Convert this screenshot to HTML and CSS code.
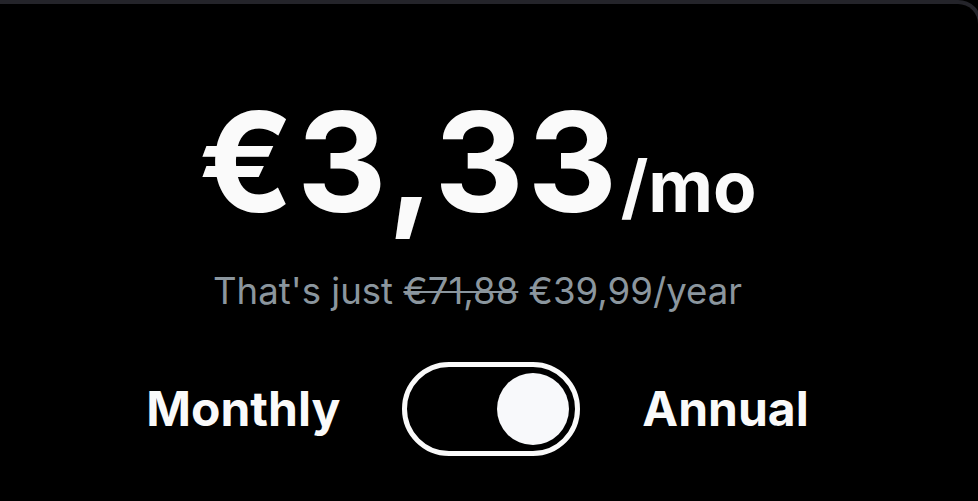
FILE: index.html
```html
<!DOCTYPE html>
<html lang="en">
<head>
<meta charset="utf-8">
<link rel="stylesheet" href="styles.css">
</head>
<body>
<div class="card">
  <div class="price">
    <span class="amount">€3,33</span><span class="per">/mo</span>
  </div>
  <p class="sub">That's just <s>€71,88</s> €39,99/year</p>
  <div class="switch-row">
    <span class="label">Monthly</span>
    <div class="toggle" role="switch" aria-checked="true"><span class="knob"></span></div>
    <span class="label">Annual</span>
  </div>
</div>
</body>
</html>
```
FILE: styles.css
```css
html, body {
  margin: 0;
  padding: 0;
  background: #000;
  overflow: hidden;
  height: 100%;
}
body {
  font-family: Inter, "Noto Sans", sans-serif;
  color: #fafafa;
}
.card {
  margin: 0 -4px 0 -27px;
  height: 100%;
  border: 4px solid #24242a;
  border-bottom: 0;
  border-radius: 24px 24px 0 0;
  background: #000;
  display: flex;
  flex-direction: column;
  align-items: center;
  padding-top: 88px;
  box-sizing: border-box;
}
.price {
  display: flex;
  align-items: baseline;
  line-height: 1;
  font-weight: 700;
}
.amount {
  font-size: 139px;
  letter-spacing: 3.5px;
}
.per {
  font-size: 71px;
}
.sub {
  margin: 39px 0 0;
  font-size: 36.6px;
  line-height: 1.2;
  color: #8b969e;
}
.sub s {
  text-decoration-thickness: 2px;
}
.switch-row {
  margin-top: 48px;
  display: flex;
  align-items: center;
  gap: 62px;
}
.label {
  font-size: 48px;
  font-weight: 700;
}
.toggle {
  width: 178px;
  height: 94px;
  box-sizing: border-box;
  border: 5px solid #fafafa;
  border-radius: 47px;
  padding: 6px;
  display: flex;
  justify-content: flex-end;
  align-items: center;
}
.knob {
  width: 72px;
  height: 72px;
  border-radius: 50%;
  background: #f8f9fb;
}
```
